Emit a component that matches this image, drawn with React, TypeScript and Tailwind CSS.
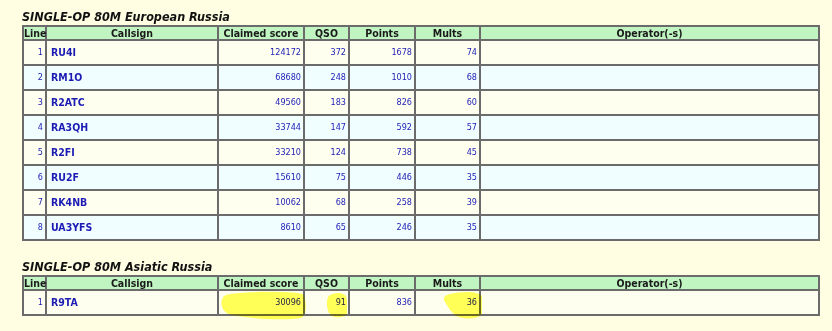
import React from "react";

type Row = { line: number; call: string; score: string; qso: string; points: string; mults: string };

const euro: Row[] = [
  { line: 1, call: "RU4I", score: "124172", qso: "372", points: "1678", mults: "74" },
  { line: 2, call: "RM1O", score: "68680", qso: "248", points: "1010", mults: "68" },
  { line: 3, call: "R2ATC", score: "49560", qso: "183", points: "826", mults: "60" },
  { line: 4, call: "RA3QH", score: "33744", qso: "147", points: "592", mults: "57" },
  { line: 5, call: "R2FI", score: "33210", qso: "124", points: "738", mults: "45" },
  { line: 6, call: "RU2F", score: "15610", qso: "75", points: "446", mults: "35" },
  { line: 7, call: "RK4NB", score: "10062", qso: "68", points: "258", mults: "39" },
  { line: 8, call: "UA3YFS", score: "8610", qso: "65", points: "246", mults: "35" },
];

const asia: Row[] = [{ line: 1, call: "R9TA", score: "30096", qso: "91", points: "836", mults: "36" }];

const headers = ["Line", "Callsign", "Claimed score", "QSO", "Points", "Mults", "Operator(-s)"];

function Table({ rows }: { rows: Row[] }) {
  return (
    <div className="w-[798px] border border-[#6b6b6b]">
      <div className="grid grid-cols-[23px_172px_86px_45px_66px_65px_339px]">
        {headers.map((h) => (
          <div
            key={h}
            className="h-[14px] border border-[#6b6b6b] bg-[#c0f5c2] text-center text-[10.5px] leading-[12px] font-bold text-[#1a1a1a]"
          >
            {h}
          </div>
        ))}
        {rows.map((r, i) => {
          const bg = i % 2 === 0 ? "bg-[#fffff0]" : "bg-[#f0feff]";
          const num = `h-[25px] border border-[#6b6b6b] ${bg} flex items-center justify-end pr-[2px] text-[9px] text-[#1c1cb4]`;
          return (
            <React.Fragment key={r.line}>
              <div className={num}>{r.line}</div>
              <div className={`h-[25px] border border-[#6b6b6b] ${bg} flex items-center pl-[4px] text-[10.5px] font-bold text-[#1c1cb4]`}>
                {r.call}
              </div>
              <div className={num}>{r.score}</div>
              <div className={num}>{r.qso}</div>
              <div className={num}>{r.points}</div>
              <div className={num}>{r.mults}</div>
              <div className={`h-[25px] border border-[#6b6b6b] ${bg}`}></div>
            </React.Fragment>
          );
        })}
      </div>
    </div>
  );
}

export default function App() {
  return (
    <div className="relative w-[832px] h-[331px] overflow-hidden bg-[#fffee3] pl-[22px] pt-[9px] font-['DejaVu_Sans_Condensed','DejaVu_Sans',sans-serif]">
      <div className="h-[16px] text-[12.5px] leading-[16px] font-bold italic text-[#111]">SINGLE-OP 80M European Russia</div>
      <Table rows={euro} />
      <div className="mt-[18px] h-[16px] text-[12.5px] leading-[16px] font-bold italic text-[#111]">SINGLE-OP 80M Asiatic Russia</div>
      <Table rows={asia} />
      <svg
        className="absolute left-0 top-0 pointer-events-none mix-blend-multiply"
        width="832"
        height="331"
        viewBox="0 0 832 331"
      >
        <defs>
          <filter id="soft" x="-10%" y="-10%" width="120%" height="120%">
            <feGaussianBlur stdDeviation="0.7" />
          </filter>
        </defs>
        <g fill="#ffff5c" filter="url(#soft)">
          <path d="M226,295 C240,291 290,291 303,294 C307,301 307,315 301,318 C282,321 242,318 229,314 C220,311 219,298 226,295 Z" />
          <path d="M330,295 C338,291 346,293 347,299 L347,314 C342,319 332,318 329,313 C326,306 326,298 330,295 Z" />
          <path d="M450,294 C462,291 478,291 482,296 L482,314 C477,320 463,319 456,316 C452,313 447,306 444,300 C443,297 446,295 450,294 Z" />
        </g>
      </svg>
    </div>
  );
}
